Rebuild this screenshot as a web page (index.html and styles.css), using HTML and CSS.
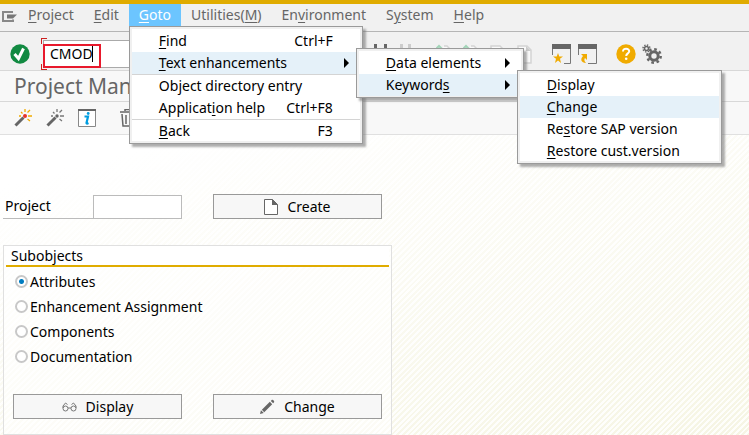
FILE: index.html
```html
<!DOCTYPE html>
<html lang="en">
<head>
<meta charset="utf-8">
<title>Project Management</title>
<link rel="stylesheet" href="styles.css">
</head>
<body>
<header class="menubar">
  <svg class="menubar-icon" width="16" height="12" viewBox="0 0 16 12"><path d="M11 1H1v9h10V8.500" fill="none" stroke="#888" stroke-width="2"/><path d="M5 3.500h10l-4 4H5z" fill="#777"/></svg>
  <nav class="menus">
    <button class="menu-title" type="button"><u>P</u>roject</button>
    <button class="menu-title" type="button"><u>E</u>dit</button>
    <div class="menu-anchor">
      <button class="menu-title menu-title-open" type="button"><u>G</u>oto</button>
      <ul class="menu menu-goto">
        <li><button type="button"><span><u>F</u>ind</span><span class="key">Ctrl+F</span></button></li>
        <li class="active"><button type="button"><span><u>T</u>ext enhancements</span><i class="arrow"></i></button>
          <ul class="menu menu-text">
            <li><button type="button"><span><u>D</u>ata elements</span><i class="arrow"></i></button></li>
            <li class="active"><button type="button"><span>Keyword<u>s</u></span><i class="arrow"></i></button>
              <ul class="menu menu-keywords">
                <li><button type="button"><span><u>D</u>isplay</span></button></li>
                <li class="active"><button type="button"><span><u>C</u>hange</span></button></li>
                <li><button type="button"><span>Re<u>s</u>tore SAP version</span></button></li>
                <li><button type="button"><span><u>R</u>estore cust.version</span></button></li>
              </ul>
            </li>
          </ul>
        </li>
        <li class="ruled"><button type="button"><span>Ob<u>j</u>ect directory entry</span></button></li>
        <li><button type="button"><span>Applicat<u>i</u>on help</span><span class="key">Ctrl+F8</span></button></li>
        <li class="ruled"><button type="button"><span><u>B</u>ack</span><span class="key">F3</span></button></li>
      </ul>
    </div>
    <button class="menu-title" type="button">Utilities(<u>M</u>)</button>
    <button class="menu-title" type="button">En<u>v</u>ironment</button>
    <button class="menu-title" type="button">S<u>y</u>stem</button>
    <button class="menu-title" type="button"><u>H</u>elp</button>
  </nav>
</header>

<div class="toolbar">
  <button class="icon-button" type="button" aria-label="Enter"><svg width="20" height="20" viewBox="0 0 20 20"><circle cx="10" cy="10" r="9.700" fill="#128a42"/><path d="M4.500 10l4 4.500L13.500 4.500" fill="none" stroke="#fff" stroke-width="3"/></svg></button>
  <div class="command">
    <input class="command-input" type="text" value="CMOD" aria-label="Command">
    <span class="highlight"></span>
  </div>
  <div class="tools">
    <button class="icon-button" type="button" aria-label="Find"><svg width="16" height="20" viewBox="0 0 16 20"><path d="M1 0h3v5h7V0h3v15H9v-6H6v6H1z" fill="#666"/></svg></button>
    <button class="icon-button" type="button" aria-label="Find next"><svg width="16" height="20" viewBox="0 0 16 20"><path d="M0 0h3v5h5V0h3v15H7v-6H4v6H0z" fill="#ccc"/></svg></button>
    <button class="icon-button page" type="button" aria-label="First page"><svg width="16" height="20" viewBox="0 0 16 20"><path d="M8 2h3l4 4v12H4V7" fill="#fafafa" stroke="#d4d4d4" stroke-width="1.500"/><path d="M0 5l3-3 3 3" fill="none" stroke="#a3d4b8" stroke-width="2"/></svg></button>
    <button class="icon-button" type="button" aria-label="Previous page"><svg width="16" height="20" viewBox="0 0 16 20"><path d="M8 2h3l4 4v12H4V7" fill="#fafafa" stroke="#d4d4d4" stroke-width="1.500"/><path d="M0 5l3-3 3 3" fill="none" stroke="#a3d4b8" stroke-width="2"/></svg></button>
    <button class="icon-button" type="button" aria-label="Next page"><svg width="16" height="20" viewBox="0 0 16 20"><path d="M1 2h9l4 4v13H1z" fill="#fafafa" stroke="#d4d4d4" stroke-width="1.500"/></svg></button>
    <button class="icon-button" type="button" aria-label="Last page"><svg width="16" height="20" viewBox="0 0 16 20"><path d="M1 2h9l4 4v13H1z" fill="#fafafa" stroke="#d4d4d4" stroke-width="1.500"/><path d="M9 2v5h5z" fill="#ccc"/></svg></button>
  </div>
  <div class="windows">
    <button class="icon-button" type="button" aria-label="New session"><svg width="20" height="20" viewBox="0 0 20 20"><path d="M0 0h19v5H0z" fill="#666"/><path d="M.5 5v6M18.500 5v14.500H12" fill="none" stroke="#777"/><path d="M6 9l1.300 3.500H11l-3 2.300L9 19l-3-2.400L3 19l1-4.200-3-2.300h3.700z" fill="#f0ab00"/></svg></button>
    <button class="icon-button" type="button" aria-label="Create shortcut"><svg width="20" height="20" viewBox="0 0 20 20"><path d="M0 0h19v5H0z" fill="#666"/><path d="M.5 5v6M18.500 5v14.500H10" fill="none" stroke="#777"/><path d="M3 10h6v6l-2-2c-1 1-1 3 1 5-5 0-6-4-3-7z" fill="#f0ab00"/></svg></button>
  </div>
  <button class="icon-button" type="button" aria-label="Help"><svg width="20" height="20" viewBox="0 0 20 20"><circle cx="10" cy="10" r="9.700" fill="#f0ab00"/><path d="M7 7.500c0-4 6.500-3.500 6.200 0C13 9.500 10.200 9.300 10.200 12" fill="none" stroke="#fff" stroke-width="2"/><circle cx="10.200" cy="14.700" r="1.300" fill="#fff"/></svg></button>
  <button class="icon-button" type="button" aria-label="Settings"><svg width="20" height="20" viewBox="0 0 20 20"><g fill="none" stroke="#666"><circle cx="12" cy="12" r="4.200" stroke-width="3"/><circle cx="12" cy="12" r="6.700" stroke-width="2.500" stroke-dasharray="2.630"/><circle cx="4.500" cy="4.500" r="2" stroke-width="1.500"/><circle cx="4.500" cy="4.500" r="3.500" stroke-width="1.500" stroke-dasharray="1.375"/></g></svg></button>
</div>

<h1 class="title">Project Man</h1>

<div class="actions">
  <button class="icon-button" type="button" aria-label="Check"><svg width="18" height="18" viewBox="0 0 18 18"><path d="M1.500 16.500l8-8" stroke="#666" stroke-width="3"/><circle cx="11" cy="7" r="2" fill="#e63329"/><path d="M7 3l1.500 1.500M11 0v3M16 1l-2.500 2.500M14 7h4M13.500 10l2.500 2M7 7H5" stroke="#f0ab00" stroke-width="1.300"/></svg></button>
  <button class="icon-button" type="button" aria-label="Activate"><svg width="18" height="18" viewBox="0 0 18 18"><path d="M1.500 16.500l8-8" stroke="#666" stroke-width="3"/><circle cx="11" cy="7" r="1.700" fill="#666"/><path d="M7 3l1.500 1.500M11 0v3M16 1l-2.500 2.500M14 7h4M13.500 10l2.500 2M7 7H5" stroke="#777" stroke-width="1.300"/></svg></button>
  <button class="icon-button" type="button" aria-label="Information"><svg width="18" height="18" viewBox="0 0 18 18"><path d="M.5 1v16.500h17V1" fill="#fff" stroke="#888"/><path d="M0 0h18v2H0z" fill="#666"/><path d="M6.500 7.500H10L8.500 14c0 1 1 .5 2 0" fill="none" stroke="#009de0" stroke-width="2.200"/><circle cx="10.200" cy="4.500" r="1.400" fill="#009de0"/></svg></button>
  <button class="icon-button delete" type="button" aria-label="Delete"><svg width="18" height="18" viewBox="0 0 18 18"><path d="M0 3h16M5 2V.5h6V2M2 5l1 12h10l1-12M6 6v9M10 6v9" fill="none" stroke="#666" stroke-width="1.500"/></svg></button>
</div>

<main class="content">
  <div class="row">
    <label class="field-label" for="project">Project</label>
    <input class="field" id="project" type="text">
    <button class="push" type="button"><svg width="14" height="16" viewBox="0 0 14 16"><path d="M.5.500h8l5 5v10H.5z" fill="#fff" stroke="#666"/><path d="M8 0v6h6z" fill="#666"/></svg>Create</button>
  </div>
  <fieldset class="group">
    <legend class="group-title">Subobjects</legend>
    <div class="options">
      <label class="option"><input type="radio" name="sub" checked>Attributes</label>
      <label class="option"><input type="radio" name="sub">Enhancement Assignment</label>
      <label class="option"><input type="radio" name="sub">Components</label>
      <label class="option"><input type="radio" name="sub">Documentation</label>
    </div>
    <div class="group-buttons">
      <button class="push" type="button"><svg width="15" height="10" viewBox="0 0 15 10"><g fill="none" stroke="#777"><circle cx="3.500" cy="6.500" r="2.500"/><circle cx="11.500" cy="6.500" r="2.500"/><path d="M6 6h3M1 6V4l2.500-3 2 1.500M14 6V4l-2.500-3-2 1.500"/></g></svg>Display</button>
      <button class="push" type="button"><svg width="15" height="15" viewBox="0 0 16 16"><path d="M0 16l1-4 3 3zM2 11.500L10.500 3 13 5.500 4.500 14zM11.500 2l1-1c1-1 3.500 1.500 2.500 2.500l-1 1z" fill="#666"/></svg>Change</button>
    </div>
  </fieldset>
</main>
</body>
</html>
```
FILE: styles.css
```css
* { box-sizing: border-box; }

body {
  margin: 0;
  min-height: 100vh;
  display: flex;
  flex-direction: column;
  border-top: 4px solid #e0ac00;
  background: #fff;
  color: #000;
  font: 14px/22px "Noto Sans", "DejaVu Sans Condensed", sans-serif;
}

button, input {
  font: inherit;
  color: inherit;
}

button {
  padding: 0;
  border: 0;
  background: none;
}

svg { display: block; flex: none; }

u { text-underline-offset: 2px; }

/* Menu bar */
.menubar {
  display: flex;
  height: 28px;
  padding-left: 2px;
  background: #f1f1f1;
  border-bottom: 1px solid #b5b5b5;
}

.menubar-icon { margin-top: 7px; }

.menus { display: flex; height: 22px; }

.menu-title {
  padding: 0 10px;
  color: #666;
}

.menu-title-open { background: #6cc5ff; color: #fff; }

.menu-anchor { position: relative; }

.menu {
  position: absolute;
  z-index: 1;
  margin: 0;
  padding: 3px 2px 1px;
  list-style: none;
  background: #fff;
  border: 1px solid #9a9a9a;
  outline: 2px solid #f0f0f0;
  outline-offset: -3px;
  box-shadow: 3px 3px 2px #7779;
}

.menu-goto { top: 22px; left: 0; width: 234px; }
.menu-text { top: -4px; left: 224px; width: 168px; }
.menu-keywords { top: -4px; left: 158px; width: 205px; }

.menu li { position: relative; }

.menu button {
  display: flex;
  justify-content: space-between;
  align-items: center;
  width: 100%;
  height: 22px;
  padding: 0 27px;
  white-space: nowrap;
}

.menu .active > button { background: #e5f1f9; }

.menu .ruled { border-top: 1px solid #d4d4d4; }

.arrow {
  margin-right: -16px;
  border: 5px solid transparent;
  border-left-color: #000;
  border-right-width: 0;
}

/* Toolbars */
.toolbar {
  display: flex;
  align-items: center;
  height: 39px;
  padding: 6px 0 0 10px;
  background: #f1f1f1;
  border-bottom: 1px solid #d8d8d8;
}

.command {
  position: relative;
  display: flex;
  width: 300px;
  margin-left: 11px;
  padding: 2px;
  background:
    linear-gradient(#c22, #c22) 0 0 / 6px 1px,
    linear-gradient(#c22, #c22) 0 0 / 1px 6px,
    linear-gradient(#c22, #c22) 0 100% / 6px 1px,
    linear-gradient(#c22, #c22) 0 100% / 1px 6px;
  background-repeat: no-repeat;
}

.command-input {
  flex: 1;
  height: 28px;
  padding: 0 6px 2px;
  border: 1px solid #aaa;
  background: #fff;
}

.highlight {
  position: absolute;
  top: 6px;
  left: 2px;
  width: 58px;
  height: 24px;
  border: 2px solid #e8192c;
}

.highlight::after {
  content: "";
  position: absolute;
  top: 0;
  right: 6px;
  width: 1px;
  height: 16px;
  background: #000;
}

.tools { display: flex; gap: 11px; margin-left: 32px; }
.tools .page { margin-left: 9px; }
.windows { display: flex; gap: 6px; margin-left: 19px; }
.windows + .icon-button { margin: 0 6px 0 18px; }

.title {
  margin: 0;
  height: 31px;
  padding-left: 14px;
  background: #f8f8f8;
  border-bottom: 1px solid #d8d8d8;
  color: #666;
  font-size: 21px;
  font-weight: 400;
  line-height: 30px;
}

.actions {
  display: flex;
  align-items: center;
  gap: 14px;
  height: 33px;
  padding-left: 14px;
  background: #f8f8f8;
  border-bottom: 1px solid #e0e0e0;
}

.delete { margin-left: 10px; }

/* Work area */
.content {
  flex: 1;
  padding: 59px 3px 0;
  background:
    linear-gradient(165deg, #fff 10%, #fff0 100%),
    repeating-linear-gradient(135deg, #f6f5e4 0 2px, #fefefb 2px 4px);
}

.row { display: flex; align-items: center; }

.field-label {
  width: 90px;
  height: 24px;
  padding-left: 2px;
  border-bottom: 1px solid #bbb;
}

.field {
  width: 89px;
  height: 24px;
  border: 1px solid #bbb;
  background: #fff;
}

.push {
  display: flex;
  align-items: center;
  justify-content: center;
  gap: 9px;
  width: 169px;
  height: 25px;
  border: 1px solid #999;
  background: #f7f7f7;
}

.row .push { margin-left: 31px; }

.group {
  max-width: 389px;
  min-width: 0;
  margin: 26px 0 0;
  padding: 0 2px 15px;
  border: 1px solid #e0e0e0;
  background: #fff8;
}

.group-title {
  float: left;
  width: 100%;
  height: 21px;
  padding: 0 5px;
  background: #fff;
  border-bottom: 2px solid #e0ac00;
  line-height: 20px;
}

.options { clear: both; padding: 2px 9px 0; }

.option {
  display: flex;
  align-items: center;
  gap: 2px;
  height: 25px;
}

.option input {
  appearance: none;
  width: 13px;
  height: 13px;
  margin: 0;
  border: 2px solid #c8c8c8;
  border-radius: 50%;
  background: #fff;
}

.option input:checked { background: radial-gradient(circle, #007cc0 2px, #fff 3px); }

.group-buttons { display: flex; gap: 31px; padding: 25px 7px 0; }
```
